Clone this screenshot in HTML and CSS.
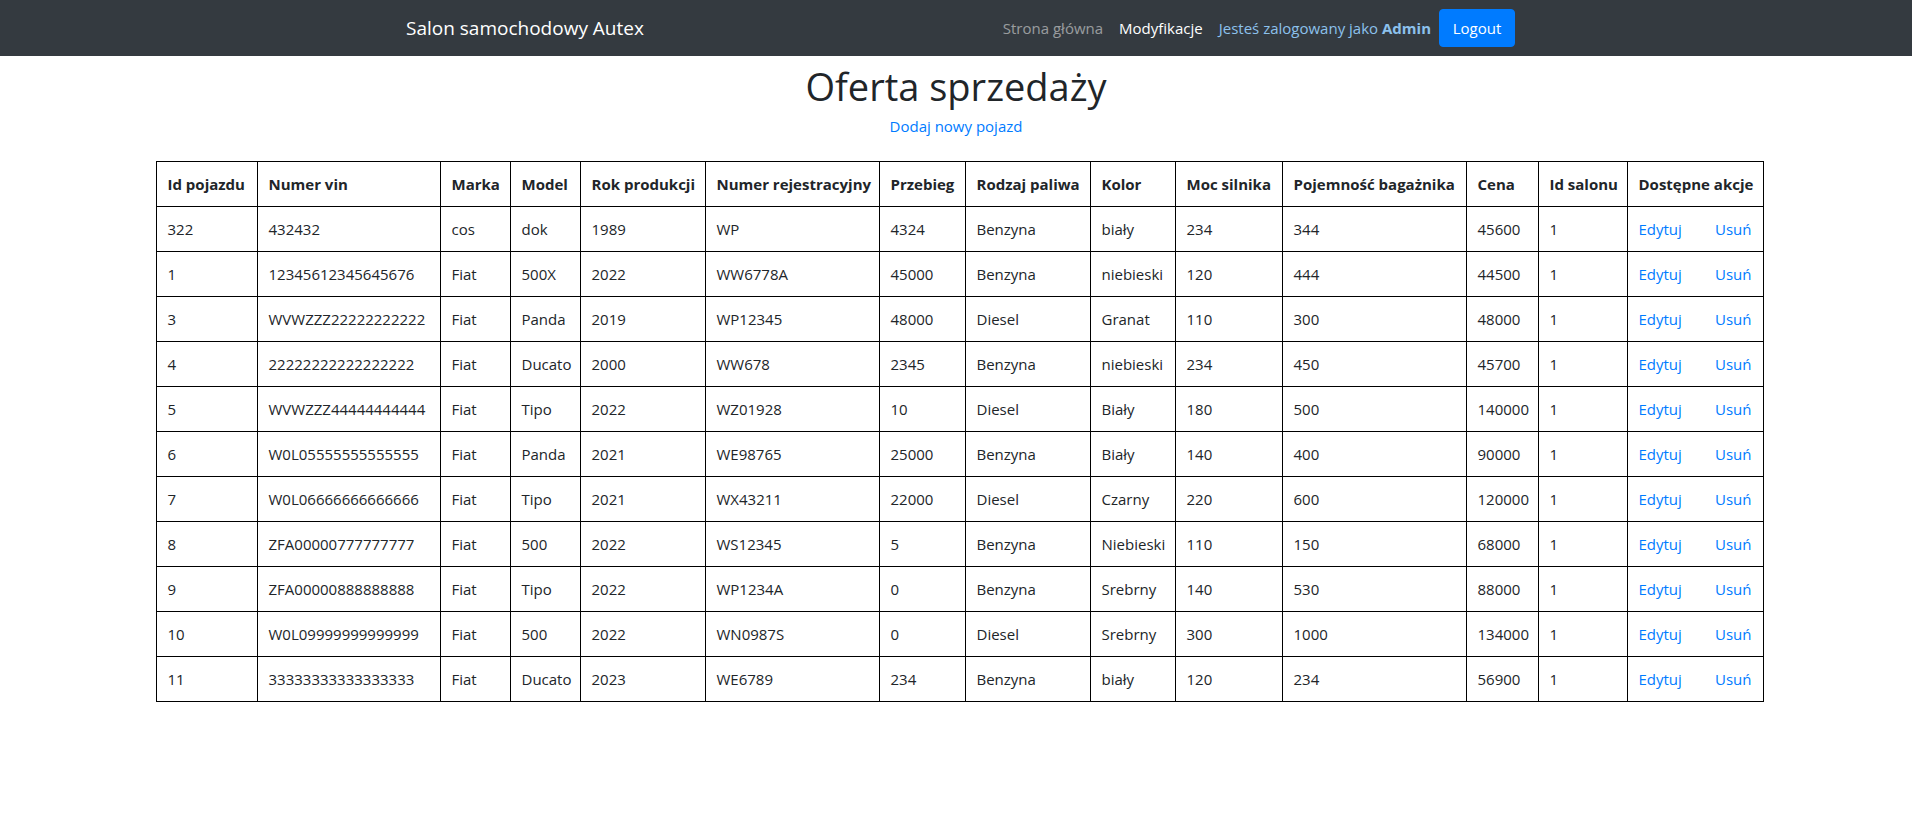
FILE: index.html
```html
<!DOCTYPE html>
<html lang="pl">
<head>
<meta charset="utf-8">
<title>Salon samochodowy Autex</title>
<link rel="stylesheet" href="styles.css">
</head>
<body>
<nav class="navbar">
  <div class="nav-container">
    <a class="brand" href="#">Salon samochodowy Autex</a>
    <ul class="nav">
      <li><a class="nav-link" href="#">Strona główna</a></li>
      <li><a class="nav-link active" href="#">Modyfikacje</a></li>
      <li><span class="nav-link user">Jesteś zalogowany jako <b>Admin</b></span></li>
      <li><button class="btn-logout" type="button">Logout</button></li>
    </ul>
  </div>
</nav>
<main class="content">
  <h1 class="title">Oferta sprzedaży</h1>
  <p class="add"><a href="#">Dodaj nowy pojazd</a></p>
  <div class="table-wrap">
  <table class="offers">
    <colgroup>
      <col class="c1"><col class="c2"><col class="c3"><col class="c4"><col class="c5"><col class="c6"><col class="c7">
      <col class="c8"><col class="c9"><col class="c10"><col class="c11"><col class="c12"><col class="c13"><col class="c14">
    </colgroup>
    <thead>
      <tr>
        <th>Id pojazdu</th><th>Numer vin</th><th>Marka</th><th>Model</th><th>Rok produkcji</th><th>Numer rejestracyjny</th><th>Przebieg</th><th>Rodzaj paliwa</th><th>Kolor</th><th>Moc silnika</th><th>Pojemność bagażnika</th><th>Cena</th><th>Id salonu</th><th>Dostępne akcje</th>
      </tr>
    </thead>
    <tbody>
      <tr><td>322</td><td>432432</td><td>cos</td><td>dok</td><td>1989</td><td>WP</td><td>4324</td><td>Benzyna</td><td>biały</td><td>234</td><td>344</td><td>45600</td><td>1</td><td><div class="actions"><a href="#">Edytuj</a><a href="#">Usuń</a></div></td></tr>
      <tr><td>1</td><td>12345612345645676</td><td>Fiat</td><td>500X</td><td>2022</td><td>WW6778A</td><td>45000</td><td>Benzyna</td><td>niebieski</td><td>120</td><td>444</td><td>44500</td><td>1</td><td><div class="actions"><a href="#">Edytuj</a><a href="#">Usuń</a></div></td></tr>
      <tr><td>3</td><td>WVWZZZ22222222222</td><td>Fiat</td><td>Panda</td><td>2019</td><td>WP12345</td><td>48000</td><td>Diesel</td><td>Granat</td><td>110</td><td>300</td><td>48000</td><td>1</td><td><div class="actions"><a href="#">Edytuj</a><a href="#">Usuń</a></div></td></tr>
      <tr><td>4</td><td>22222222222222222</td><td>Fiat</td><td>Ducato</td><td>2000</td><td>WW678</td><td>2345</td><td>Benzyna</td><td>niebieski</td><td>234</td><td>450</td><td>45700</td><td>1</td><td><div class="actions"><a href="#">Edytuj</a><a href="#">Usuń</a></div></td></tr>
      <tr><td>5</td><td>WVWZZZ44444444444</td><td>Fiat</td><td>Tipo</td><td>2022</td><td>WZ01928</td><td>10</td><td>Diesel</td><td>Biały</td><td>180</td><td>500</td><td>140000</td><td>1</td><td><div class="actions"><a href="#">Edytuj</a><a href="#">Usuń</a></div></td></tr>
      <tr><td>6</td><td>W0L05555555555555</td><td>Fiat</td><td>Panda</td><td>2021</td><td>WE98765</td><td>25000</td><td>Benzyna</td><td>Biały</td><td>140</td><td>400</td><td>90000</td><td>1</td><td><div class="actions"><a href="#">Edytuj</a><a href="#">Usuń</a></div></td></tr>
      <tr><td>7</td><td>W0L06666666666666</td><td>Fiat</td><td>Tipo</td><td>2021</td><td>WX43211</td><td>22000</td><td>Diesel</td><td>Czarny</td><td>220</td><td>600</td><td>120000</td><td>1</td><td><div class="actions"><a href="#">Edytuj</a><a href="#">Usuń</a></div></td></tr>
      <tr><td>8</td><td>ZFA00000777777777</td><td>Fiat</td><td>500</td><td>2022</td><td>WS12345</td><td>5</td><td>Benzyna</td><td>Niebieski</td><td>110</td><td>150</td><td>68000</td><td>1</td><td><div class="actions"><a href="#">Edytuj</a><a href="#">Usuń</a></div></td></tr>
      <tr><td>9</td><td>ZFA00000888888888</td><td>Fiat</td><td>Tipo</td><td>2022</td><td>WP1234A</td><td>0</td><td>Benzyna</td><td>Srebrny</td><td>140</td><td>530</td><td>88000</td><td>1</td><td><div class="actions"><a href="#">Edytuj</a><a href="#">Usuń</a></div></td></tr>
      <tr><td>10</td><td>W0L09999999999999</td><td>Fiat</td><td>500</td><td>2022</td><td>WN0987S</td><td>0</td><td>Diesel</td><td>Srebrny</td><td>300</td><td>1000</td><td>134000</td><td>1</td><td><div class="actions"><a href="#">Edytuj</a><a href="#">Usuń</a></div></td></tr>
      <tr><td>11</td><td>33333333333333333</td><td>Fiat</td><td>Ducato</td><td>2023</td><td>WE6789</td><td>234</td><td>Benzyna</td><td>biały</td><td>120</td><td>234</td><td>56900</td><td>1</td><td><div class="actions"><a href="#">Edytuj</a><a href="#">Usuń</a></div></td></tr>
    </tbody>
  </table>
  </div>
</main>
</body>
</html>
```

FILE: styles.css
```css
* { box-sizing: border-box; }

html, body {
  margin: 0;
  padding: 0;
  background: #fff;
}

body {
  font-family: "Open Sans", "Noto Sans", "DejaVu Sans", sans-serif;
  font-size: 15px;
  line-height: 24px;
  color: #212529;
}

a { color: #007bff; text-decoration: none; }

/* Navbar */
.navbar {
  background: #343a40;
  height: 56px;
  padding: 8px 0;
}

.nav-container {
  width: 1140px;
  margin: 0 auto;
  padding: 0 11px 0 20px;
  display: flex;
  align-items: center;
  height: 40px;
}

.brand {
  color: #fff;
  font-size: 19px;
  line-height: 30px;
  padding: 5px 0;
}

.nav {
  list-style: none;
  margin: 0 0 0 auto;
  padding: 0;
  display: flex;
  align-items: center;
}

.nav-link {
  display: block;
  padding: 8px 8px;
  color: rgba(255, 255, 255, 0.5);
}

.nav-link.first { padding-left: 8px; }

.nav-link.active { color: #fff; }

.nav-link.user { color: #8cc1ec; }
.nav-link.user b { font-weight: 700; }

.btn-logout {
  font-family: inherit;
  font-size: 15px;
  line-height: 24px;
  color: #fff;
  background: #007bff;
  border: 1px solid #007bff;
  border-radius: 4px;
  padding: 6px 12px;
  height: 38px;
  width: 76px;
}

/* Content */
.content {
  text-align: center;
}

.title {
  font-size: 38px;
  font-weight: 400;
  line-height: 46px;
  margin: 7px 0 0;
}

.add {
  margin: 5px 0 0;
  line-height: 24px;
}

.table-wrap {
  padding: 23px 0 0 7px;
}

.offers {
  width: 1607px;
  margin: 0 auto;
  border-collapse: collapse;
  table-layout: fixed;
  text-align: left;
}

.offers th,
.offers td {
  border: 1px solid #000;
  padding: 10px 11px;
  height: 45px;
  white-space: nowrap;
  vertical-align: middle;
}

.offers th { font-weight: 700; }

.actions {
  display: flex;
  justify-content: space-between;
}

.c1 { width: 101px; }
.c2 { width: 183px; }
.c3 { width: 70px; }
.c4 { width: 70px; }
.c5 { width: 125px; }
.c6 { width: 174px; }
.c7 { width: 86px; }
.c8 { width: 125px; }
.c9 { width: 85px; }
.c10 { width: 107px; }
.c11 { width: 184px; }
.c12 { width: 72px; }
.c13 { width: 89px; }
.c14 { width: 136px; }
```
